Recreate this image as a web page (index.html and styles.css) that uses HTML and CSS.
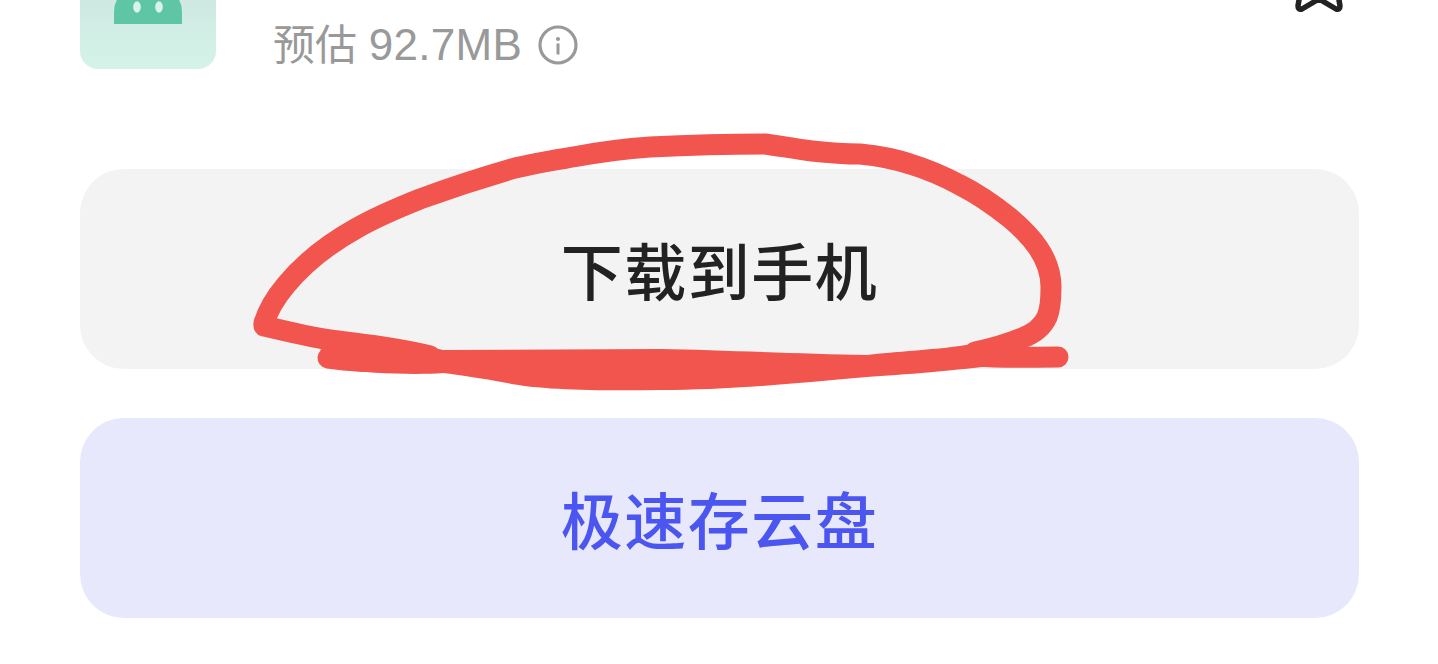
FILE: index.html
```html
<!DOCTYPE html>
<html lang="zh">
<head>
<meta charset="utf-8">
<title>下载</title>
<link rel="stylesheet" href="styles.css">
</head>
<body>
<main class="sheet">
  <header class="app">
    <div class="app-icon">
      <svg class="app-glyph" viewBox="0 0 68 24" aria-hidden="true">
        <path class="glyph-body" d="M0 24V12Q0 4 4 -2H64Q68 4 68 12V24Z"/>
        <ellipse class="glyph-eye" cx="23" cy="7" rx="3.8" ry="5.8"/>
        <ellipse class="glyph-eye" cx="45" cy="7" rx="3.8" ry="5.8"/>
      </svg>
    </div>
    <div class="app-meta">
      <span class="app-size">预估 <span class="app-size-num">92.7MB</span></span>
      <svg class="info" viewBox="0 0 40 40" aria-hidden="true">
        <circle class="info-ring" cx="20" cy="20" r="18"/>
        <circle class="info-dot" cx="20" cy="14" r="2"/>
        <rect class="info-dot" x="18.5" y="18.5" width="3" height="11"/>
      </svg>
    </div>
    <svg class="star" viewBox="0 0 54 14" aria-hidden="true">
      <path class="star-line" d="M8 -6L6 6Q6 10 10 9L27 -1L44 9Q48 10 48 6L46 -6"/>
    </svg>
  </header>
  <div class="actions">
    <button class="btn btn-phone">下载到手机</button>
    <button class="btn btn-cloud">极速存云盘</button>
  </div>
  <svg class="scribble" viewBox="0 0 1438 664" aria-hidden="true">
    <path class="ink-fill" d="M320 350C350 335 400 340 443 350L660 349C720 350 800 354 867 355C900 351 950 349 977 343L1000 365C960 370 900 375 867 377C780 385 720 390 660 390C600 391 540 390 507 383C480 378 460 375 443 373C420 375 370 374 330 368Z"/>
    <path class="ink-line" d="M264 323C268 310 275 298 286 285C305 262 330 243 357 228C378 216 395 209 420 199C450 188 480 178 515 168C535 163 555 160 573 157C600 152 620 149 650 147C690 145 730 144 765 144C780 146 795 149 812 151C830 153 845 154 860 154C880 156 895 159 910 164C930 170 945 177 960 185C980 195 995 206 1010 218C1030 235 1051 257 1051 287C1051 300 1050 310 1047 317C1042 328 1033 334 1022 338C1005 345 990 349 975 352"/>
    <path class="ink-line" d="M264 326C285 331 310 337 330 340C360 344 395 347 430 356"/>
    <path class="ink-line" d="M328 358C350 361 380 363 420 362"/>
    <path class="ink-line" d="M978 356C1000 358 1030 357 1058 357"/>
  </svg>
</main>
</body>
</html>
```
FILE: styles.css
```css
* { box-sizing: border-box; }
html, body { margin: 0; height: 100%; background: #fff; overflow: hidden; }
body { font-family: "Liberation Sans", "Noto Sans CJK SC", sans-serif; }
.sheet { position: relative; width: 1438px; height: 664px; padding: 0 79px 0 80px; }
.app { display: flex; height: 69px; margin-bottom: 100px; }
.app-icon { width: 136px; height: 69px; flex: none; padding: 0 34px; border-radius: 0 0 18px 18px; background: linear-gradient(180deg, #cde9e1, #d6f3ea); }
.app-glyph { display: block; width: 68px; height: 24px; overflow: hidden; }
.glyph-body { fill: #5fc6a5; }
.glyph-eye { fill: #d9f3ea; }
.app-meta { display: flex; align-items: center; gap: 16px; height: 40px; margin: 25px 0 0 57px; }
.app-size { font-size: 42px; line-height: 40px; color: #999; white-space: nowrap; }
.app-size-num { font-size: 44px; letter-spacing: 0.3px; }
.info { width: 40px; height: 40px; flex: none; }
.info-ring { fill: none; stroke: #999; stroke-width: 3.2; }
.info-dot { fill: #999; }
.star { width: 54px; height: 14px; margin-left: auto; margin-right: 13px; flex: none; overflow: hidden; }
.star-line { fill: none; stroke: #222; stroke-width: 5.5; stroke-linejoin: round; stroke-linecap: round; }
.actions { display: flex; flex-direction: column; gap: 49px; }
.btn { display: block; width: 100%; height: 200px; border: 0; border-radius: 44px; font-family: "Noto Sans CJK SC", sans-serif; font-size: 62px; font-weight: 500; letter-spacing: 1.5px; }
.btn-phone { background: #f3f3f3; color: #222; }
.btn-cloud { background: #e8e8fd; color: #4b55f0; }
.scribble { position: absolute; left: 0; top: 0; width: 1438px; height: 664px; pointer-events: none; }
.ink-fill { fill: #f2544e; }
.ink-line { fill: none; stroke: #f2544e; stroke-width: 21; stroke-linecap: round; stroke-linejoin: round; }
```
